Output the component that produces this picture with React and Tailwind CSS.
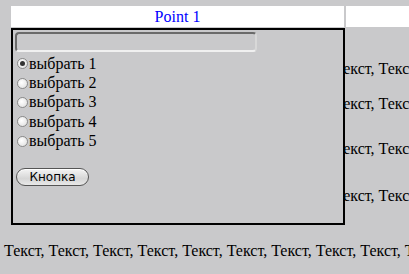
import React, { useState } from "react";

const serif = { fontFamily: '"Liberation Serif", "DejaVu Serif", serif' };

function Radio({ checked, label, onClick }) {
  return (
    <label className="flex items-center h-[19.4px] cursor-pointer" onClick={onClick}>
      <span className="w-[11px] h-[11px] rounded-full border border-[#8a8a8a] bg-[radial-gradient(circle_at_40%_40%,#ffffff,#dcdcdc)] flex items-center justify-center mr-[1px]">
        {checked && <span className="w-[5px] h-[5px] rounded-full bg-[#333]" />}
      </span>
      <span className="text-[16px] text-black leading-none" style={serif}>
        {label}
      </span>
    </label>
  );
}

export default function App() {
  const [choice, setChoice] = useState(1);
  const filler = "Текст, Текст, Текст, Текст, Текст, Текст, Текст, Текст, Текст, Текст, Текст, Текст";

  return (
    <div className="w-[409px] h-[274px] bg-[#c9c9cb] overflow-hidden relative" style={serif}>
      <div className="pt-[6px] flex">
        <div className="ml-[11px] w-[333px] h-[21px] bg-white flex items-center justify-center text-[16px] text-[#0000ff]">
          Point 1
        </div>
        <div className="ml-[2px] flex-1 h-[21px] bg-white" />
      </div>

      <div className="flex">
        <div className="ml-[11px] mt-[1px] w-[334px] h-[197px] border-2 border-black shrink-0 pl-[2px] pt-[2px]">
          <div className="w-[242px] h-[20px] rounded-[4px] border-2 border-t-[#6a6a6a] border-l-[#6a6a6a] border-r-[#d8d8d8] border-b-[#f0f0f0] bg-[#c9c9cb]" />
          <div className="mt-[2px] pl-[2px]">
            {[1, 2, 3, 4, 5].map((n) => (
              <Radio key={n} checked={choice === n} label={`выбрать ${n}`} onClick={() => setChoice(n)} />
            ))}
          </div>
          <button
            className="mt-[17px] ml-[1px] w-[73px] h-[18px] rounded-full border border-[#555] bg-[linear-gradient(#f4f4f4,#d6d6d6_60%,#e8e8e8)] text-[12px] text-black leading-none flex items-center justify-center shadow-[inset_0_1px_0_#fff]"
            style={{ fontFamily: '"DejaVu Sans", Verdana, sans-serif' }}
          >
            Кнопка
          </button>
        </div>
        <div className="overflow-hidden text-[16px] text-black whitespace-nowrap">
          <div className="-ml-[11px] mt-[30px]">{filler}</div>
          <div className="-ml-[11px] mt-[11px]">{filler}</div>
          <div className="-ml-[11px] mt-[21px]">{filler}</div>
          <div className="-ml-[11px] mt-[23px]">{filler}</div>
        </div>
      </div>

      <div className="mt-[14px] pl-[4px] text-[16px] text-black whitespace-nowrap">{filler}</div>
    </div>
  );
}
